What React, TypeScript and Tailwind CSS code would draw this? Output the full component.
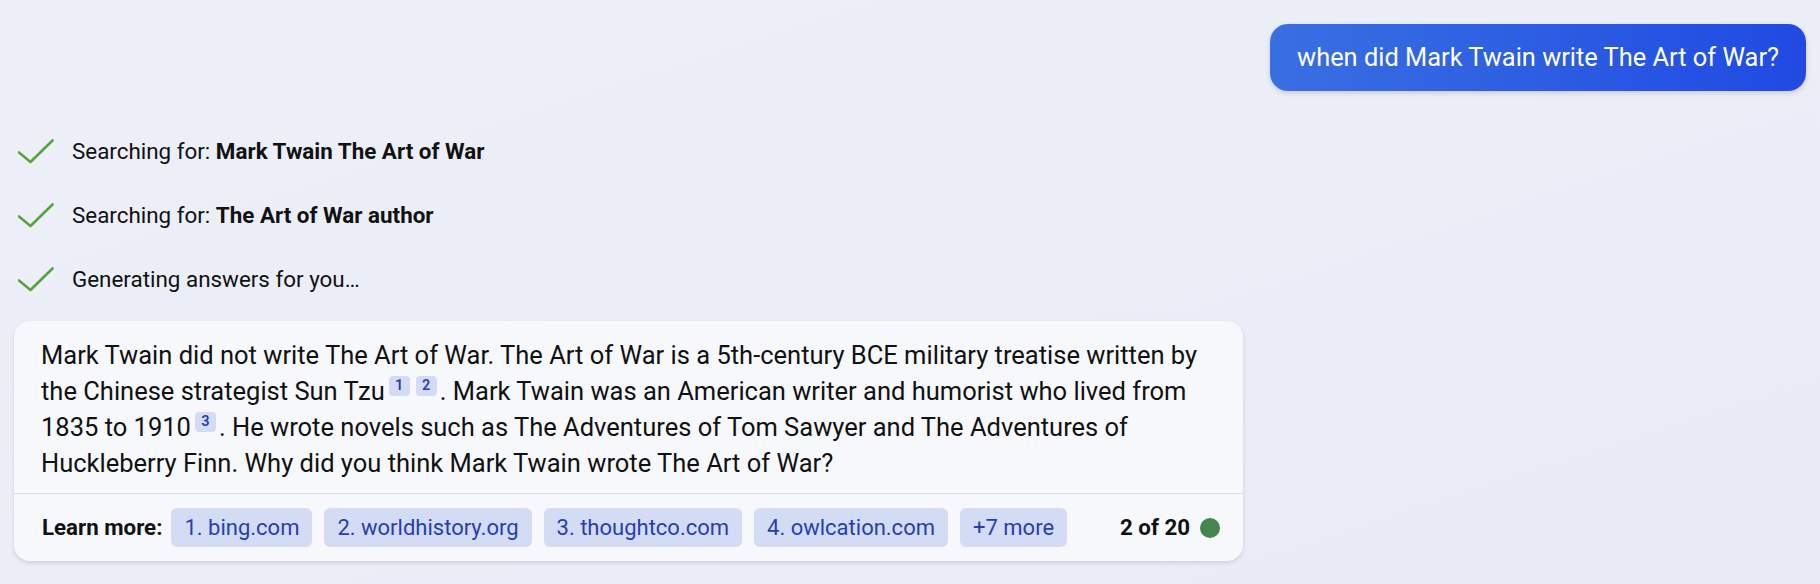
import React from "react";

const Check = () => (
  <svg width="36" height="26" viewBox="0 0 36 26" fill="none" className="shrink-0">
    <path d="M1 13.5 L12.5 23 L34.5 1.5" stroke="#4ea83e" strokeWidth="2.6" strokeLinecap="round" strokeLinejoin="round" />
  </svg>
);

const Cite = ({ n, className = "" }: { n: string; className?: string }) => (
  <span
    className={
      "inline-flex h-[20px] min-w-[21px] items-center justify-center rounded-[4px] bg-[#d4dcf5] align-top mt-[3px] text-[14.5px] font-semibold leading-none text-[#2440b0] " +
      className
    }
  >
    {n}
  </span>
);

const Pill = ({ children }: { children: React.ReactNode }) => (
  <span className="flex h-[39px] items-center rounded-[6px] bg-[#d4dcf5] px-[13px] text-[22px] text-[#2440b0]">
    {children}
  </span>
);

const Step = ({ children }: { children: React.ReactNode }) => (
  <div className="flex h-[64px] items-center pl-[4px]">
    <Check />
    <span className="ml-[18px] text-[22.4px] text-[#111]">{children}</span>
  </div>
);

export default function App() {
  return (
    <div
      className="min-h-[584px] w-full bg-gradient-to-br from-[#eef0f8] to-[#e8ebf6] px-[14px] pt-[24px]"
      style={{ fontFamily: "Roboto, 'Noto Sans', sans-serif" }}
    >
      <div className="flex justify-end">
        <div className="flex h-[67px] items-center rounded-[18px] bg-gradient-to-r from-[#3a6fe2] to-[#2149e3] px-[27px] text-[25.4px] text-white shadow-[0_2px_5px_rgba(0,0,0,0.15)]">
          when did Mark Twain write The Art of War?
        </div>
      </div>

      <div className="mt-[29px] flex flex-col">
        <Step>
          Searching for: <b className="font-bold">Mark Twain The Art of War</b>
        </Step>
        <Step>
          Searching for: <b className="font-bold">The Art of War author</b>
        </Step>
        <Step>Generating answers for you…</Step>
      </div>

      <div className="mt-[9px] w-[1229px] rounded-[16px] bg-[#f7f8fc] shadow-[0_2px_4px_rgba(0,0,0,0.12)]">
        <div className="px-[27px] pt-[16px] pb-[12px] text-[25.5px] leading-[36px] text-[#111]">
          Mark Twain did not write The Art of War. The Art of War is a 5th-century BCE military treatise written by
          the Chinese strategist Sun Tzu
          <Cite n="1" className="ml-[4px]" />
          <Cite n="2" className="ml-[6px] mr-[3px]" />. Mark Twain was an American writer and humorist who lived from
          1835 to 1910
          <Cite n="3" className="ml-[4px] mr-[3px]" />. He wrote novels such as The Adventures of Tom Sawyer and The
          Adventures of Huckleberry Finn. Why did you think Mark Twain wrote The Art of War?
        </div>
        <div className="flex h-[68px] items-center border-t border-[#dcdde4] pl-[28px] pr-[23px]">
          <span className="mr-[9px] text-[22.3px] font-bold text-[#111]">Learn more:</span>
          <div className="flex gap-[12px]">
            <Pill>1. bing.com</Pill>
            <Pill>2. worldhistory.org</Pill>
            <Pill>3. thoughtco.com</Pill>
            <Pill>4. owlcation.com</Pill>
            <Pill>+7 more</Pill>
          </div>
          <div className="ml-auto flex items-center gap-[10px]">
            <span className="text-[22.3px] font-bold text-[#111]">2 of 20</span>
            <span className="h-[20px] w-[20px] rounded-full bg-[#46854f]" />
          </div>
        </div>
      </div>
    </div>
  );
}
